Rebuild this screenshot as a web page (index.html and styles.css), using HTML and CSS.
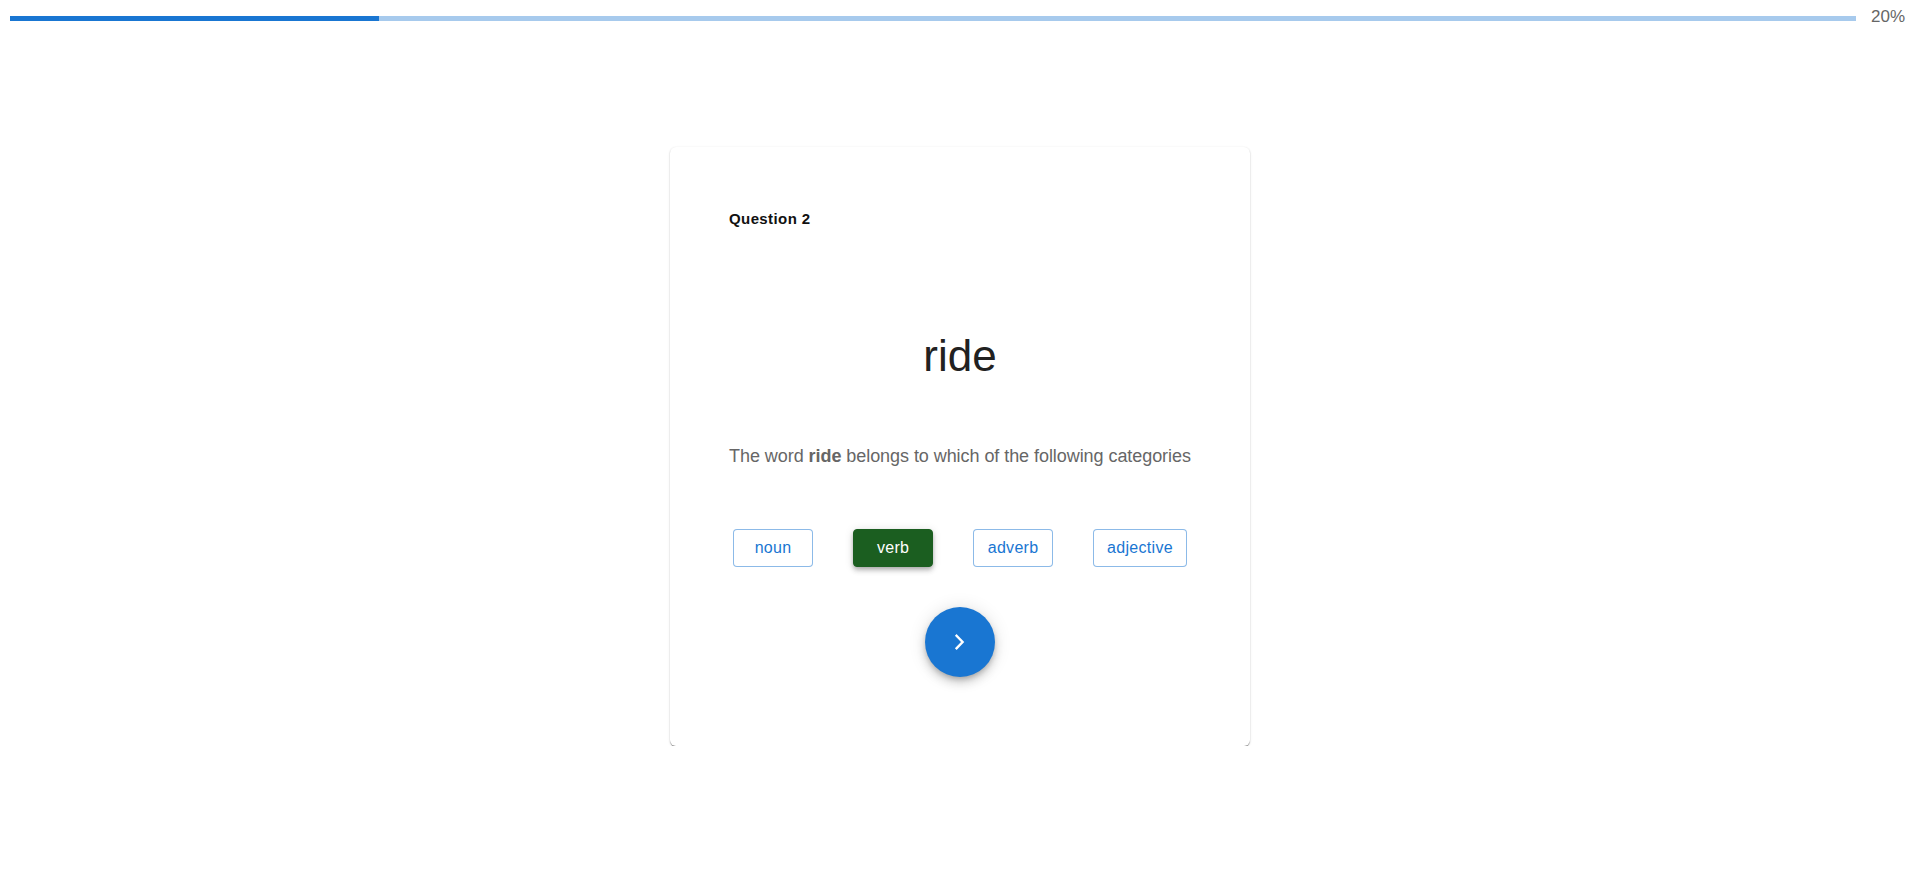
FILE: index.html
```html
<!DOCTYPE html>
<html lang="en">
<head>
<meta charset="utf-8">
<title>Quiz</title>
<link rel="stylesheet" href="styles.css">
</head>
<body>
<div class="progress-row">
  <div class="progress-track">
    <div class="progress-fill" style="width: 20%"></div>
  </div>
  <div class="progress-label">20%</div>
</div>
<main class="stage">
  <section class="card">
    <div class="question-num">Question 2</div>
    <div class="word">ride</div>
    <p class="prompt">The word <b>ride</b> belongs to which of the following categories</p>
    <div class="options">
      <button class="opt">noun</button>
      <button class="opt selected">verb</button>
      <button class="opt">adverb</button>
      <button class="opt">adjective</button>
    </div>
    <div class="next-wrap">
      <button class="fab" aria-label="next">
        <svg viewBox="0 0 16 16" width="16" height="16"><polyline points="4.6,1.8 10.6,8 4.6,14.2" fill="none" stroke="#fff" stroke-width="2.4" stroke-linecap="square" stroke-linejoin="miter"/></svg>
      </button>
    </div>
  </section>
</main>
</body>
</html>
```
FILE: styles.css
```css
* { box-sizing: border-box; }
html, body { margin: 0; padding: 0; background: #fff; }
body { font-family: "Liberation Sans", Arial, sans-serif; }

.progress-row {
  display: flex;
  align-items: center;
  padding: 8px 14px 0 10px;
  height: 29px;
}
.progress-track {
  flex: 1;
  height: 5px;
  background: #a7caed;
  overflow: hidden;
}
.progress-fill {
  height: 100%;
  background: #1976d2;
}
.progress-label {
  margin-left: 15px;
  width: 35px;
  font-size: 17px;
  color: #666;
  line-height: 20px;
  margin-top: -3px;
  white-space: nowrap;
}

.stage {
  display: flex;
  justify-content: center;
  padding-top: 118px;
}
.card {
  width: 580px;
  background: #fff;
  border-radius: 6px;
  box-shadow: 0px 1px 1px 0px rgba(0,0,0,0.3), 0px 2px 1px -1px rgba(0,0,0,0.2), 0px 1px 3px 0px rgba(0,0,0,0.1), 0px 0px 2px 0px rgba(0,0,0,0.04);
  padding: 63px 59px 69px;
}
.question-num {
  font-size: 15px;
  line-height: 18px;
  font-weight: 700;
  letter-spacing: 0.4px;
  color: #111;
}
.word {
  margin-top: 102px;
  text-align: center;
  font-size: 44px;
  line-height: 52.8px;
  color: #212121;
}
.prompt {
  margin: 60px 0 0;
  text-align: center;
  font-size: 18px;
  letter-spacing: -0.06px;
  line-height: 27px;
  color: #666;
  white-space: nowrap;
}
.prompt b { font-weight: 700; }
.options {
  margin-top: 59px;
  display: flex;
  justify-content: center;
  gap: 40px;
}
.opt {
  height: 38px;
  min-width: 80px;
  padding: 0 13px;
  border: 1px solid rgba(25,118,210,0.5);
  border-radius: 4px;
  background: #fff;
  color: #1976d2;
  font-family: "Liberation Sans", Arial, sans-serif;
  font-size: 16px;
  letter-spacing: 0.3px;
  cursor: pointer;
}
.opt.selected {
  background: #1b5e20;
  border-color: #1b5e20;
  color: #fff;
  box-shadow: 0px 2px 4px -1px rgba(0,0,0,0.2), 0px 4px 5px 0px rgba(0,0,0,0.14), 0px 1px 10px 0px rgba(0,0,0,0.12);
}
.next-wrap {
  margin-top: 40px;
  display: flex;
  justify-content: center;
}
.fab {
  width: 70px;
  height: 70px;
  border-radius: 50%;
  border: none;
  background: #1976d2;
  display: flex;
  align-items: center;
  justify-content: center;
  padding: 0;
  box-shadow: 0px 3px 5px -1px rgba(0,0,0,0.2), 0px 6px 10px 0px rgba(0,0,0,0.14), 0px 1px 18px 0px rgba(0,0,0,0.12);
  cursor: pointer;
}
.fab svg { display: block; }
```
